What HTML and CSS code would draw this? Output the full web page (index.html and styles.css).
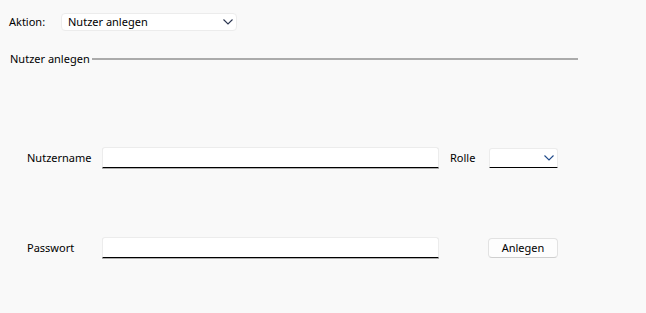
FILE: index.html
```html
<!DOCTYPE html>
<html lang="de">
<head>
    <meta charset="UTF-8">
    <title>Nutzer anlegen</title>
    <link rel="stylesheet" href="styles.css">
</head>
<body>
    <div class="action-row">
        <label class="action-label">Aktion:</label>
        <div class="combo combo-action">
            <span>Nutzer anlegen</span>
            <svg class="chevron" width="10" height="6" viewBox="0 0 10 6"><path d="M0.5 0.5 L5 5 L9.5 0.5" fill="none" stroke="#2a3550" stroke-width="1.1"/></svg>
        </div>
    </div>

    <div class="group-header">
        <span class="group-title">Nutzer anlegen</span>
        <span class="group-line"></span>
    </div>

    <div class="form">
        <label class="field-label">Nutzername</label>
        <div class="text-box"></div>
        <label class="field-label role-label">Rolle</label>
        <div class="combo combo-role">
            <svg class="chevron" width="10" height="6" viewBox="0 0 10 6"><path d="M0.5 0.5 L5 5 L9.5 0.5" fill="none" stroke="#1f4a8a" stroke-width="1.1"/></svg>
        </div>

        <label class="field-label">Passwort</label>
        <div class="text-box"></div>
        <span></span>
        <button class="btn">Anlegen</button>
    </div>
</body>
</html>
```

FILE: styles.css
```css
body {
    margin: 0;
    background: #f9f9f9;
    font-family: "Noto Sans", "Open Sans", sans-serif;
    font-size: 11px;
    color: #000;
    width: 646px;
    height: 313px;
    overflow: hidden;
}
.action-row {
    display: flex;
    align-items: center;
    padding: 13px 0 0 9px;
    height: 17px;
}
.action-label {
    width: 52px;
}
.combo {
    display: flex;
    align-items: center;
    justify-content: space-between;
    box-sizing: border-box;
    background: #fff;
    border: 1px solid #ececec;
    border-radius: 4px;
}
.combo-action {
    width: 176px;
    height: 18px;
    padding: 0 3px 0 6px;
}
.combo-action span {
    line-height: 16px;
}
.chevron {
    display: block;
    flex: none;
}
.group-header {
    display: flex;
    align-items: center;
    margin-top: 20px;
    padding-left: 10px;
    height: 16px;
}
.group-title {
    white-space: nowrap;
}
.group-line {
    display: block;
    width: 486px;
    height: 2px;
    margin-left: 2px;
    margin-top: 1px;
    background: #ababab;
}
.form {
    display: grid;
    grid-template-columns: 75px 337px 50px 69px;
    grid-template-rows: 21px 21px;
    row-gap: 69px;
    align-items: center;
    padding: 81px 0 0 27px;
}
.field-label {
    line-height: 21px;
}
.role-label {
    padding-left: 11px;
}
.text-box {
    box-sizing: border-box;
    height: 21px;
    background: #fff;
    border: 1px solid #ececec;
    border-bottom: 1px solid #000;
    border-radius: 3px 3px 0 0;
    box-shadow: 0 1px 0 rgba(0, 0, 0, 0.3);
}
.combo-role {
    height: 20px;
    padding: 0 3px 0 4px;
    justify-content: flex-end;
    border-bottom: 1px solid #000;
    border-radius: 3px 3px 0 0;
}
.btn {
    box-sizing: border-box;
    margin-left: -1px;
    width: 70px;
    height: 20px;
    padding: 0;
    background: #fdfdfd;
    border: 1px solid #e2e2e2;
    border-bottom-color: #cfcfcf;
    border-radius: 4px;
    font-family: inherit;
    font-size: 11px;
    color: #000;
}
```
